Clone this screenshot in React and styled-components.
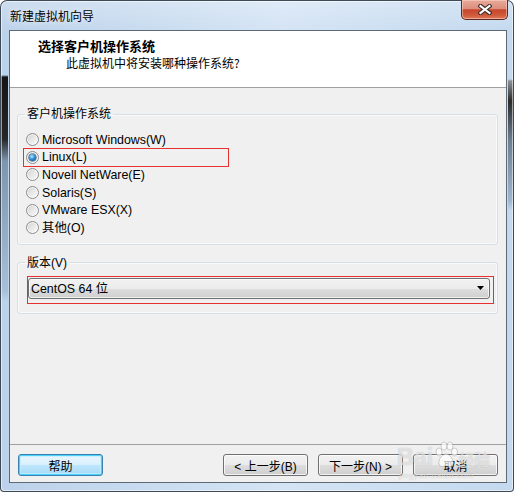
import React from "react";
import styled, { createGlobalStyle } from "styled-components";

const Global = createGlobalStyle`
  html, body { margin: 0; padding: 0; background: #ffffff; }
  body { font-family: "Liberation Sans", "Noto Sans CJK SC", sans-serif; font-size: 12px; color: #000; }
  * { box-sizing: border-box; }
`;

const Window = styled.div`
  position: relative;
  width: 514px;
  height: 492px;
  display: flex;
  flex-direction: column;
  padding: 0 6px 8px 8px;
  border: 1px solid rgba(38, 48, 60, 0.85);
  border-radius: 7px 7px 4px 4px;
  background:
    linear-gradient(to bottom, transparent 74px, #151515 76px, #262626 138px, #7f95ab 160px, #a7bfd8 290px, transparent 300px) left top / 7px 100% no-repeat,
    linear-gradient(to bottom, transparent 78px, #8b9096 80px, #2b2b2b 100px, #6d7f92 140px, #9fb7d0 200px, transparent 210px) right top / 5px 100% no-repeat,
    linear-gradient(to bottom, rgba(255,255,255,0.25), rgba(255,255,255,0) 30px),
    linear-gradient(to right, #bcd2ea, #d4e4f5 55%, #c4d9ef);
  box-shadow: inset 0 0 0 1px rgba(255, 255, 255, 0.55);
`;

const TitleBar = styled.div`
  height: 29px;
  display: flex;
  align-items: center;
  padding-left: 1px;
`;

const Title = styled.div`
  flex: 1;
  font-size: 12px;
  font-family: "Noto Sans CJK SC", sans-serif;
  color: #000;
  text-shadow: 0 0 6px rgba(255, 255, 255, 0.9);
  padding-bottom: 1px;
`;

const CloseButton = styled.div`
  align-self: flex-start;
  margin-top: -1px;
  margin-right: -1px;
  width: 47px;
  height: 20px;
  display: flex;
  align-items: center;
  justify-content: center;
  border: 1px solid #5c2a22;
  border-top: none;
  border-radius: 0 0 5px 5px;
  background: linear-gradient(to bottom, #e9a99a 0%, #dc8f7d 45%, #c8452c 52%, #cf5a3c 80%, #e07a58 100%);
  box-shadow: inset 0 0 0 1px rgba(255, 220, 210, 0.5);
`;

const Client = styled.div`
  flex: 1;
  display: flex;
  flex-direction: column;
  background: #f0f0f0;
  border: 1px solid #5d6974;
`;

const Header = styled.div`
  height: 57px;
  background: #ffffff;
  border-bottom: 1px solid #a0a0a0;
  padding: 7px 0 0 28px;
  font-family: "Noto Sans CJK SC", sans-serif;
`;

const Heading = styled.div`
  font-weight: bold;
  font-size: 13px;
  line-height: 16px;
`;

const SubHeading = styled.div`
  margin: 1px 0 0 28px;
  font-size: 12px;
  line-height: 16px;
`;

const Body = styled.div`
  flex: 1;
  padding: 18px 8px 0 7px;
  display: flex;
  flex-direction: column;
`;

const Group = styled.fieldset`
  margin: ${(p) => (p.$first ? "0" : "10px 0 0 0")};
  padding: ${(p) => p.$pad};
  border: 1px solid #d5dfe5;
  border-radius: 3px;
  box-shadow: inset 0 0 0 1px rgba(255, 255, 255, 0.6);
  min-width: 0;
`;

const Legend = styled.legend`
  margin-left: 7px;
  padding: 0 2px;
  line-height: 16px;
  font-size: 12px;
  color: #000;
`;

const RadioRow = styled.label`
  position: relative;
  display: flex;
  align-items: center;
  height: 17.6px;
  padding-left: 8px;
  gap: 3px;
  line-height: 16px;
  font-size: 12.4px;
`;

const Radio = styled.span`
  position: relative;
  width: 13px;
  height: 13px;
  flex: none;
  border-radius: 50%;
  border: 1px solid #8b8b8b;
  background: linear-gradient(135deg, #cfcfcf 0%, #e6e6e6 45%, #fbfbfb 100%);
  box-shadow: inset 0 0 0 1px rgba(255, 255, 255, 0.7);

  &::after {
    content: "";
    display: ${(p) => (p.$checked ? "block" : "none")};
    position: absolute;
    left: 2px;
    top: 2px;
    width: 7px;
    height: 7px;
    border-radius: 50%;
    background: radial-gradient(circle at 40% 35%, #bfe8fd 0%, #3a9be0 40%, #0d4f92 85%);
    box-shadow: 0 0 0 0.5px #1b3f66;
  }
`;

const Highlight = styled.span`
  position: absolute;
  left: 5px;
  top: -0.5px;
  width: 206px;
  height: 19px;
  border: 1px solid #e8302e;
  pointer-events: none;
`;

const ComboFrame = styled.div`
  margin: 0 3px 0 9px;
  padding: 1px 3px 4px 0;
  border: 1px solid #e8302e;
`;

const Combo = styled.div`
  height: 21px;
  display: flex;
  align-items: center;
  padding: 0 5px 0 2px;
  border: 1px solid #707070;
  border-radius: 3px;
  background: linear-gradient(to bottom, #f2f2f2 0%, #ebebeb 50%, #dddddd 51%, #cfcfcf 100%);
  box-shadow: inset 0 0 0 1px rgba(255, 255, 255, 0.7);
  font-family: "Liberation Sans", "Noto Sans CJK SC", sans-serif;
  font-size: 12.4px;
`;

const ComboText = styled.span`
  flex: 1;
`;

const Footer = styled.div`
  height: 38px;
  border-top: 1px solid #a0a0a0;
  display: flex;
  align-items: flex-start;
  padding: 9px 8px 0 8px;
  gap: 10px;
  font-family: "Noto Sans CJK SC", "Liberation Sans", sans-serif;
`;

const Spacer = styled.div`
  flex: 1;
`;

const Button = styled.div`
  width: 85px;
  height: 22px;
  display: flex;
  align-items: center;
  justify-content: center;
  border-radius: 3px;
  font-size: 12px;
  font-family: "Liberation Sans", "Noto Sans CJK SC", sans-serif;
  border: 1px solid ${(p) => (p.$default ? "#3c7fb1" : "#707070")};
  background: ${(p) =>
    p.$default
      ? "linear-gradient(to bottom, #eaf6fd 0%, #d9f0fc 50%, #bee6fd 51%, #a7d9f5 100%)"
      : "linear-gradient(to bottom, #f2f2f2 0%, #ebebeb 50%, #dddddd 51%, #cfcfcf 100%)"};
  box-shadow: ${(p) =>
    p.$default
      ? "inset 0 0 0 1px #48d1fb, inset 0 0 0 2px rgba(190, 240, 255, 0.7)"
      : "inset 0 0 0 1px rgba(255, 255, 255, 0.75)"};
`;

const Watermark = styled.div`
  position: absolute;
  left: 396px;
  top: 440px;
  display: flex;
  flex-direction: column;
  pointer-events: none;
  color: rgba(255, 255, 255, 0.6);
  text-shadow: 0 0 1px rgba(90, 90, 90, 0.4);
`;

const WatermarkLogo = styled.div`
  display: flex;
  align-items: flex-end;
  font-family: "Liberation Sans", sans-serif;
  font-weight: bold;
  font-size: 24px;
  line-height: 26px;
  letter-spacing: -0.5px;
`;

const WatermarkCn = styled.span`
  font-family: "Noto Sans CJK SC", sans-serif;
  font-size: 16px;
  line-height: 22px;
  font-weight: bold;
`;

const WatermarkUrl = styled.div`
  font-family: "Liberation Sans", sans-serif;
  font-size: 8px;
  line-height: 9px;
  margin-top: 1px;
  padding-left: 2px;
  letter-spacing: 0.6px;
`;

const CloseIcon = () => (
  <svg width="14" height="11" viewBox="0 0 14 11">
    <path d="M2.5 2 L11.5 9 M11.5 2 L2.5 9" stroke="#3a2a28" strokeWidth="4.2" strokeLinecap="square" />
    <path d="M2.5 2 L11.5 9 M11.5 2 L2.5 9" stroke="#ffffff" strokeWidth="2.2" strokeLinecap="square" />
  </svg>
);

const Arrow = () => (
  <svg width="7" height="4" viewBox="0 0 7 4">
    <path d="M0 0 H7 L3.5 4 Z" fill="#000" />
  </svg>
);

const Paw = () => (
  <svg width="26" height="28" viewBox="0 0 26 28" style={{ marginBottom: 1 }}>
    <g fill="rgba(255,255,255,0.7)" stroke="rgba(110,110,110,0.4)" strokeWidth="0.8">
      <ellipse cx="6" cy="11" rx="3" ry="4" />
      <ellipse cx="11" cy="5" rx="3" ry="4" />
      <ellipse cx="17" cy="5" rx="3" ry="4" />
      <ellipse cx="21.5" cy="11" rx="3" ry="4" />
      <path d="M13 13 C9 13 5 19 6 23 C7 27 11 25 13 25 C15 25 19 27 20 23 C21 19 17 13 13 13 Z" />
    </g>
  </svg>
);

const systems = [
  { label: "Microsoft Windows(W)" },
  { label: "Linux(L)", checked: true },
  { label: "Novell NetWare(E)" },
  { label: "Solaris(S)" },
  { label: "VMware ESX(X)" },
  { label: "其他(O)" },
];

export default function App() {
  return (
    <>
      <Global />
      <Window>
        <TitleBar>
          <Title>新建虚拟机向导</Title>
          <CloseButton>
            <CloseIcon />
          </CloseButton>
        </TitleBar>
        <Client>
          <Header>
            <Heading>选择客户机操作系统</Heading>
            <SubHeading>此虚拟机中将安装哪种操作系统?</SubHeading>
          </Header>
          <Body>
            <Group $first $pad="9px 0 7px 0">
              <Legend>客户机操作系统</Legend>
              {systems.map((s) => (
                <RadioRow key={s.label}>
                  <Radio $checked={s.checked} />
                  <span>{s.label}</span>
                  {s.checked && <Highlight />}
                </RadioRow>
              ))}
            </Group>
            <Group $pad="5px 0 9px 0">
              <Legend>版本(V)</Legend>
              <ComboFrame>
                <Combo>
                  <ComboText>CentOS 64 位</ComboText>
                  <Arrow />
                </Combo>
              </ComboFrame>
            </Group>
          </Body>
          <Footer>
            <Button $default>帮助</Button>
            <Spacer />
            <Button>&lt; 上一步(B)</Button>
            <Button>下一步(N) &gt;</Button>
            <Button>取消</Button>
          </Footer>
        </Client>
        <Watermark>
          <WatermarkLogo>
            Bai
            <Paw />
            <WatermarkCn>经验</WatermarkCn>
          </WatermarkLogo>
          <WatermarkUrl>jingyan.baidu.com</WatermarkUrl>
        </Watermark>
      </Window>
    </>
  );
}
